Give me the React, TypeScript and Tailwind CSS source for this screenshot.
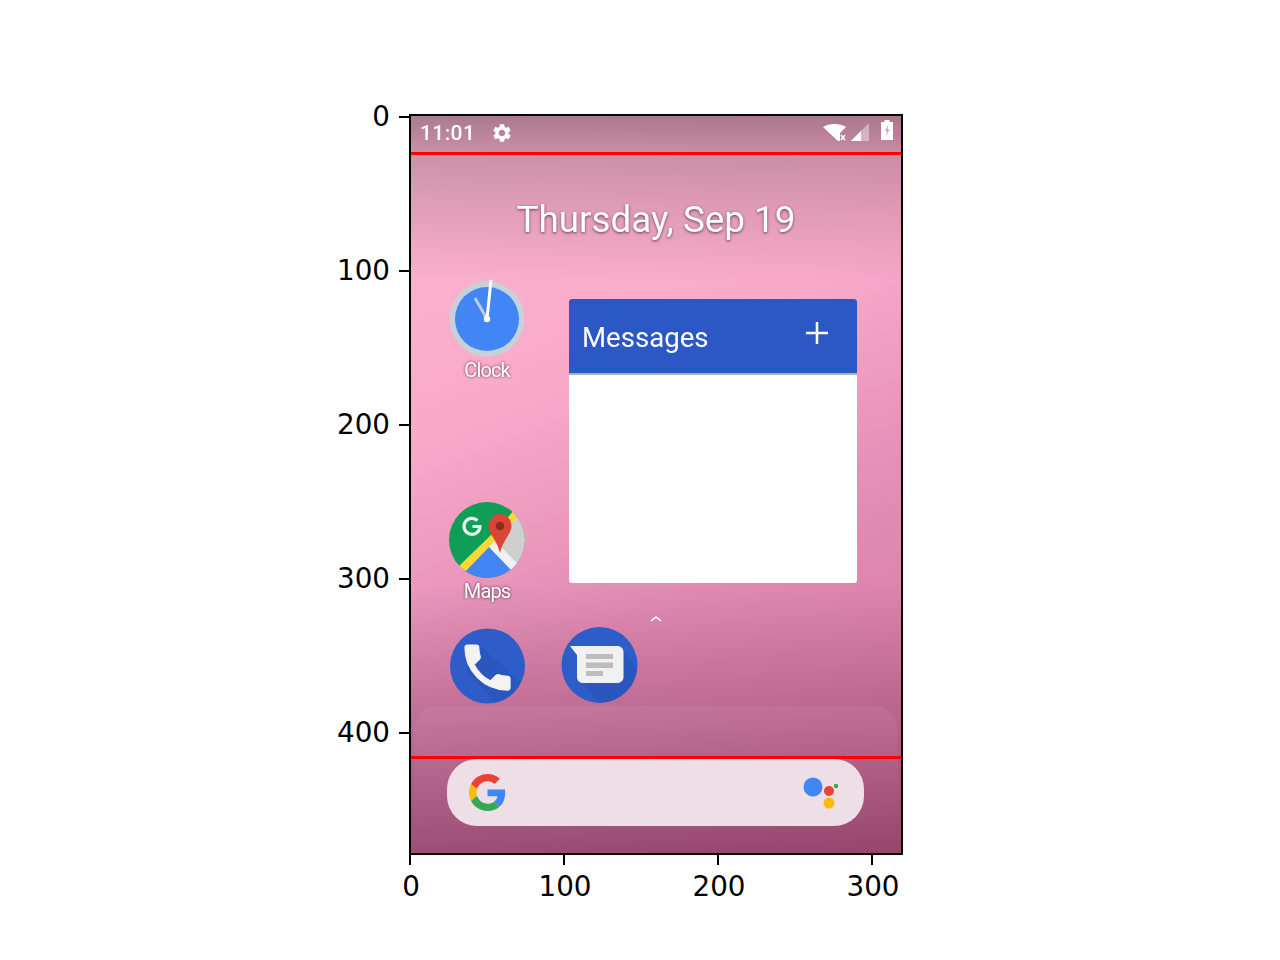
const yTicks = [0, 100, 200, 300, 400];
const xTicks = [0, 100, 200, 300];

function ClockIcon() {
  return (
    <svg width="76" height="76" viewBox="0 0 76 76" className="block overflow-visible blur-[0.4px]">
      <circle cx="38" cy="37" r="37.500" fill="#c6d2da" />
      <circle cx="38" cy="37" r="32" fill="#4285f4" />
      <line x1="38" y1="37" x2="26" y2="16" stroke="#ffffff" strokeOpacity="0.6" strokeWidth="3" />
      <line x1="38" y1="37" x2="42" y2="-2" stroke="#ffffff" strokeWidth="3" />
      <circle cx="38" cy="37" r="3.200" fill="#ffffff" />
    </svg>
  );
}

function MapsIcon() {
  return (
    <svg width="76" height="78" viewBox="0 0 76 78" className="block blur-[0.6px]">
      <defs>
        <clipPath id="mapsClip">
          <circle cx="38" cy="39" r="38" />
        </clipPath>
      </defs>
      <g clipPath="url(#mapsClip)">
        <rect width="76" height="78" fill="#0f9d58" />
        <path d="M64 10L78 0V78H60L41 44Z" fill="#cfcfcf" />
        <path d="M8 76L39 45L66 72V78H8Z" fill="#4285f4" />
        <path d="M39 45L45 39L72 66L65 72Z" fill="#f1f1f1" />
        <path d="M9 66L43 33L64 11L68 17L14 73Z" fill="#fdd835" />
      </g>
      <path d="M51 13C44.500 13 39.500 18.500 39.500 25C39.500 33 47 37 51 52C55 37 62.500 33 62.500 25C62.500 18.500 57.500 13 51 13Z" fill="#db4437" />
      <circle cx="51" cy="25" r="4.200" fill="#8a2a22" />
      <path d="M28.500 19.500A8 8 0 1 0 31 25.500H23.500" fill="none" stroke="#e8f5ee" strokeWidth="3.200" />
    </svg>
  );
}

function PhoneIcon() {
  return (
    <svg width="76" height="76" viewBox="0 0 76 76" className="block blur-[0.5px]">
      <defs>
        <clipPath id="phoneClip">
          <circle cx="37.500" cy="38" r="37.500" />
        </clipPath>
      </defs>
      <circle cx="37.500" cy="38" r="37.500" fill="#2e5cc9" />
      <path d="M30 18L80 62V80H50L16 42Z" fill="#2450b0" opacity="0.4" clipPath="url(#phoneClip)" />
      <path
        transform="translate(7.5 9.5) scale(2.5)"
        fill="#f3f3f3"
        stroke="#f3f3f3"
        strokeWidth="0.5"
        d="M6.62 10.79c1.44 2.83 3.76 5.14 6.59 6.59l2.2-2.2c.27-.27.67-.36 1.02-.24 1.12.37 2.33.57 3.57.57.55 0 1 .45 1 1V20c0 .55-.45 1-1 1-9.39 0-17-7.61-17-17 0-.55.45-1 1-1h3.500c.55 0 1 .45 1 1 0 1.25.2 2.45.57 3.57.11.35.03.74-.25 1.02l-2.2 2.2z"
      />
    </svg>
  );
}

function MessagesIcon() {
  return (
    <svg width="77" height="78" viewBox="0 0 77 78" className="block blur-[0.5px]">
      <defs>
        <clipPath id="msgClip">
          <circle cx="38.500" cy="39" r="38" />
        </clipPath>
      </defs>
      <circle cx="38.500" cy="39" r="38" fill="#2e5cc9" />
      <path d="M16 50L60 22L90 60L50 90Z" fill="#2450b0" opacity="0.4" clipPath="url(#msgClip)" />
      <path d="M9 20H56C60 20 62.500 22.500 62.500 26V51C62.500 54.500 60 57 56 57H22C18.500 57 16 54.500 16 51V29Z" fill="#f1f1f1" />
      <rect x="25" y="28" width="27" height="5" fill="#bdbdbd" />
      <rect x="25" y="36.500" width="27" height="5.500" fill="#bdbdbd" />
      <rect x="25" y="45" width="17" height="5" fill="#bdbdbd" />
    </svg>
  );
}

function GoogleG() {
  return (
    <svg width="37" height="37" viewBox="0 0 48 48" className="block">
      <path fill="#EA4335" d="M24 9.5c3.54 0 6.71 1.22 9.21 3.6l6.85-6.85C35.9 2.38 30.47 0 24 0 14.62 0 6.51 5.38 2.56 13.22l7.98 6.19C12.43 13.72 17.74 9.5 24 9.5z" />
      <path fill="#4285F4" d="M46.98 24.55c0-1.57-.15-3.09-.38-4.55H24v9.02h12.94c-.58 2.96-2.26 5.48-4.78 7.18l7.73 6c4.51-4.18 7.09-10.36 7.09-17.65z" />
      <path fill="#FBBC05" d="M10.53 28.59c-.48-1.45-.76-2.99-.76-4.59s.27-3.14.76-4.59l-7.98-6.19C.92 16.46 0 20.12 0 24c0 3.88.92 7.54 2.56 10.78l7.97-6.19z" />
      <path fill="#34A853" d="M24 48c6.48 0 11.93-2.13 15.89-5.81l-7.730-6c-2.15 1.45-4.92 2.3-8.16 2.3-6.26 0-11.57-4.22-13.47-9.91l-7.98 6.19C6.51 42.62 14.62 48 24 48z" />
    </svg>
  );
}

function AssistantDots() {
  return (
    <svg width="36" height="32" viewBox="0 0 36 32" className="block">
      <circle cx="10" cy="10" r="9.500" fill="#4285f4" />
      <circle cx="26" cy="14" r="5" fill="#ea4335" />
      <circle cx="26" cy="26" r="5.500" fill="#fbbc05" />
      <circle cx="33" cy="9" r="2.200" fill="#34a853" />
    </svg>
  );
}

function StatusIcons() {
  return (
    <div className="flex items-start">
      <svg width="24" height="19" viewBox="0 0 24 19" className="mt-[8px] block blur-[0.3px]">
        <path d="M0 3C3 1 7 0 11.500 0C16 0 20 1 23 3L17 9V17H15L0 3Z" fill="#ffffff" />
        <path d="M18 11L22 16M22 11L18 16" stroke="#ffffff" strokeWidth="1.500" />
      </svg>
      <svg width="19" height="19" viewBox="0 0 19 19" className="ml-[4px] mt-[7px] block blur-[0.3px]">
        <path d="M0 18L18 0V18Z" fill="#ffffff" fillOpacity="0.4" />
        <path d="M0 18L10 8V18Z" fill="#ffffff" />
      </svg>
      <svg width="12" height="20" viewBox="0 0 12 20" className="ml-[11px] mt-[4px] block blur-[0.3px]">
        <path d="M3.500 0H8.500V2H12V20H0V2H3.500Z" fill="#ffffff" />
        <path d="M7 5L4 11H6L5 16L8.500 9.500H6.500Z" fill="#c9a0b4" />
      </svg>
    </div>
  );
}

function AppLabel({ children }: { children: string }) {
  return (
    <div className="text-center font-['Roboto',sans-serif] text-[20px] leading-[22px] tracking-[-0.9px] text-white [text-shadow:0_0_3px_rgba(60,30,40,0.9)] blur-[0.3px]">
      {children}
    </div>
  );
}

export default function App() {
  return (
    <div className="h-[960px] w-[1280px] overflow-hidden bg-white pl-[409px] pt-[114px]">
      <div className="relative h-[741px] w-[494px] border-2 border-black">
        {/* tick marks and labels of the plot */}
        {yTicks.map((t) => (
          <div key={t} className="absolute left-[-12px] h-[2px] w-[10px] bg-black" style={{ top: t * 1.54 }}>
            <span className="absolute right-[19px] top-[-15px] font-['DejaVu_Sans',sans-serif] text-[27.78px] leading-[32px] text-black">
              {t}
            </span>
          </div>
        ))}
        {xTicks.map((t) => (
          <div key={t} className="absolute bottom-[-12px] h-[10px] w-[2px] bg-black" style={{ left: t * 1.54 - 2 }}>
            <span className="absolute left-[2px] top-[16px] -translate-x-1/2 font-['DejaVu_Sans',sans-serif] text-[27.78px] leading-[32px] text-black">
              {t}
            </span>
          </div>
        ))}

        {/* phone screen */}
        <div className="relative flex h-full w-full flex-col overflow-hidden bg-[linear-gradient(158deg,#fdb6d1_0%,#f9aac9_34%,#e08ab2_64%,#d07098_100%)]">
          <div className="absolute inset-x-0 top-0 h-[165px] bg-[linear-gradient(to_bottom,rgba(70,50,60,0.45),rgba(70,50,60,0.26)_25%,rgba(70,50,60,0))]" />
          <div className="absolute inset-x-0 bottom-0 h-[270px] bg-[linear-gradient(to_top,rgba(70,10,50,0.42),rgba(70,10,50,0))]" />
          <div className="absolute inset-x-[3px] bottom-0 h-[147px] rounded-t-[24px] bg-[linear-gradient(to_bottom,rgba(255,255,255,0.06),rgba(255,255,255,0))]" />

          <div className="relative flex h-[36px] shrink-0 items-start justify-between pl-[9px] pr-[8px]">
            <div className="flex items-center pt-[5px]">
              <span className="w-[72px] font-['Roboto',sans-serif] text-[21px] font-medium leading-[25px] tracking-[0.4px] text-white blur-[0.3px]">
                11:01
              </span>
              <svg width="22" height="22" viewBox="0 0 24 24" fill="#ffffff" className="-ml-[1px] -mt-[2px] block blur-[0.3px]">
                <path d="M19.14 12.94c.04-.3.06-.61.06-.94 0-.32-.02-.64-.07-.94l2.030-1.58c.18-.14.23-.41.12-.61l-1.92-3.32c-.12-.22-.37-.29-.59-.22l-2.39.96c-.5-.38-1.03-.7-1.62-.94l-.36-2.54c-.04-.24-.24-.41-.48-.41h-3.84c-.24 0-.43.17-.47.41l-.36 2.54c-.59.24-1.13.57-1.62.94l-2.39-.96c-.22-.08-.47 0-.59.22L2.74 8.87c-.12.21-.08.47.12.61l2.03 1.58c-.05.3-.09.63-.09.94s.02.64.07.94l-2.03 1.58c-.18.14-.23.41-.12.61l1.92 3.32c.12.22.37.29.59.22l2.39-.96c.5.38 1.03.7 1.62.94l.36 2.54c.05.24.24.41.48.41h3.84c.24 0 .44-.17.47-.41l.36-2.54c.59-.24 1.13-.56 1.62-.94l2.39.96c.22.08.47 0 .59-.22l1.92-3.32c.12-.22.07-.47-.12-.61l-2.01-1.58zM12 15.6c-1.98 0-3.6-1.62-3.6-3.6s1.62-3.6 3.6-3.6 3.6 1.62 3.6 3.6-1.62 3.6-3.6 3.6z" />
              </svg>
            </div>
            <StatusIcons />
          </div>

          <div className="relative h-[130px] shrink-0 pt-[48px] text-center font-['Roboto',sans-serif] text-[36.8px] leading-[40px] text-white [text-shadow:0_1px_3px_rgba(70,30,50,0.8)] blur-[0.3px]">
            Thursday, Sep 19
          </div>

          <div className="relative flex h-[320px] shrink-0 pl-[38px]">
            <div className="flex w-[76px] flex-col">
              <div className="h-[219px]">
                <ClockIcon />
                <div className="mt-[1px]">
                  <AppLabel>Clock</AppLabel>
                </div>
              </div>
              <MapsIcon />
              <div className="mt-[1px]">
                <AppLabel>Maps</AppLabel>
              </div>
            </div>
            <div className="ml-[44px] mt-[17px] h-[284px] w-[288px] overflow-hidden rounded-[3px] bg-white">
              <div className="flex h-[76px] items-center justify-between border-b-2 border-[#b0b0b0] bg-[#2c58c6] pl-[13px] pr-[28px]">
                <span className="pt-[4px] font-['Roboto',sans-serif] text-[27.6px] leading-[32px] text-white blur-[0.3px]">
                  Messages
                </span>
                <svg width="24" height="24" viewBox="0 0 24 24" className="-mt-[6px] block">
                  <path d="M12 1V23M1 12H23" stroke="#ffffff" strokeWidth="2.500" />
                </svg>
              </div>
            </div>
          </div>

          <div className="relative flex h-[25px] shrink-0 justify-center pt-[13px]">
            <svg width="12" height="8" viewBox="0 0 12 8" className="block">
              <path d="M1 6L6 2L11 6" fill="none" stroke="#ffffff" strokeWidth="1.600" />
            </svg>
          </div>

          <div className="relative flex h-[77px] shrink-0 pl-[39px]">
            <div className="mt-[1px]">
              <PhoneIcon />
            </div>
            <div className="ml-[35px] -mt-[1px]">
              <MessagesIcon />
            </div>
          </div>

          <div className="relative ml-[36px] mt-[55px] flex h-[67px] w-[417px] shrink-0 items-center justify-between rounded-[30px] bg-[#eedfe6] pl-[22px] pr-[25px]">
            <GoogleG />
            <AssistantDots />
          </div>

          {/* red marker lines */}
          <div className="absolute inset-x-0 top-[36px] h-[3px] bg-[#ff0000]" />
          <div className="absolute inset-x-0 top-[640px] h-[3px] bg-[#ff0000]" />
        </div>
      </div>
    </div>
  );
}
